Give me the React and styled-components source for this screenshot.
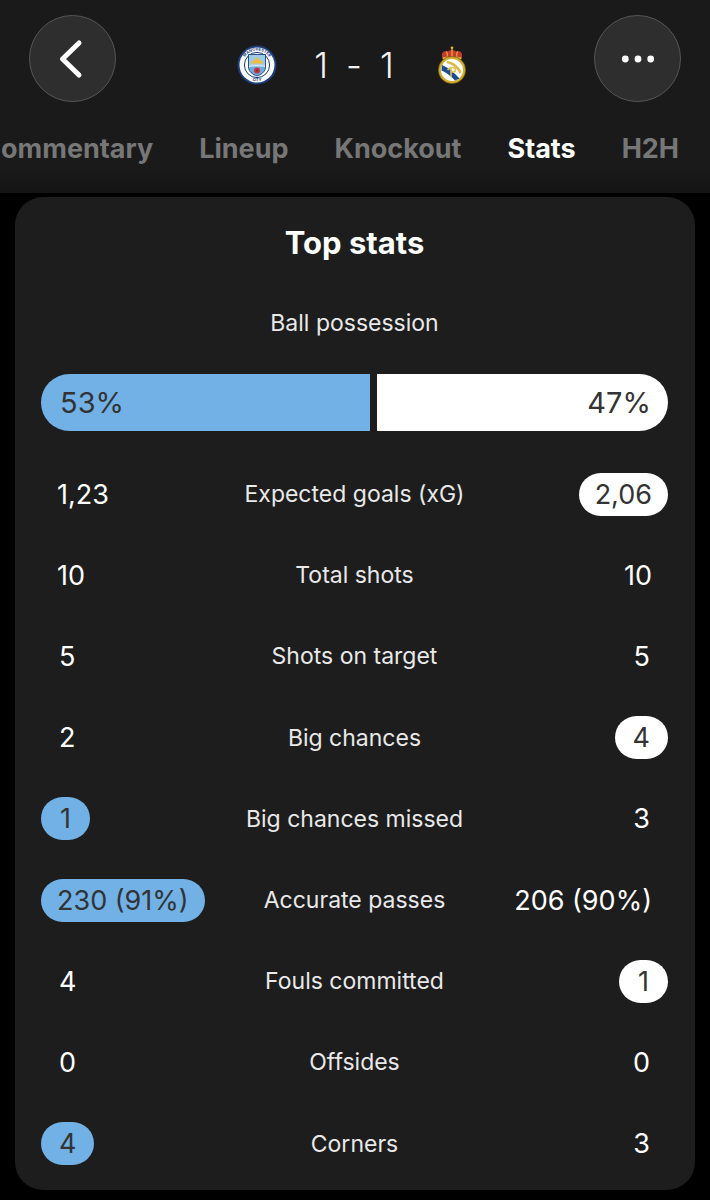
import React from "react";
import styled, { createGlobalStyle } from "styled-components";

const Global = createGlobalStyle`
  html, body { margin: 0; padding: 0; background: #000; }
  body { font-family: Inter, "Liberation Sans", sans-serif; -webkit-font-smoothing: antialiased; }
`;
const Page = styled.div`width: 710px; height: 1200px; overflow: hidden; background: #000;`;
const Header = styled.header`
  height: 193px; box-sizing: border-box; padding-top: 15px; overflow: hidden;
  background: linear-gradient(#1a1a1a 0, #1a1a1a 85%, #151515 100%);
`;
const TopRow = styled.div`display: flex; align-items: center; justify-content: space-between; padding: 0 29px;`;
const RoundButton = styled.button`
  width: 87px; height: 87px; box-sizing: border-box; border-radius: 50%; padding: 0;
  display: flex; align-items: center; justify-content: center;
  background: #2e2e2e; border: 1.5px solid #565656; color: #fff;
`;
const Score = styled.div`
  display: flex; align-items: center; height: 87px; padding-top: 13px; margin-right: 6px; box-sizing: border-box;
`;
const ScoreText = styled.div`
  width: 120px; margin: 0 23px 0 17px; display: flex; justify-content: center; gap: 18px; color: #f2f2f2;
  font-size: 35px; font-weight: 300; line-height: 44px;
`;
const Tabs = styled.nav`
  display: flex; justify-content: flex-end; gap: 46px; padding-right: 31px; margin-top: 29px;
  white-space: nowrap;
`;
const Tab = styled.span`
  font-size: 27px; line-height: 36px; font-weight: 700;
  color: ${p => (p.$active ? "#fff" : "#777")};
`;
const Card = styled.main`
  width: 680px; height: 993px; margin: 4px 0 0 15px; box-sizing: border-box; padding: 26px 27px 0 26px;
  background: #1d1d1d; border-radius: 28px; color: #fff;
`;
const Title = styled.h1`margin: 0; text-align: center; font-size: 31px; line-height: 40px; font-weight: 700;`;
const Label = styled.div`text-align: center; font-size: 23px; line-height: 30px; color: #e9e9e9; white-space: nowrap;`;
const PossessionLabel = styled(Label)`margin-top: 45px;`;
const Bar = styled.div`display: grid; grid-template-columns: 53fr 47fr; column-gap: 7px; height: 57px; margin-top: 36px;`;
const Segment = styled.div`
  display: flex; align-items: center; box-sizing: border-box;
  font-size: 29px; color: #333;
  justify-content: ${p => (p.$side === "left" ? "flex-start" : "flex-end")};
  padding: ${p => (p.$side === "left" ? "0 0 0 19px" : "0 17px 0 0")};
  background: ${p => (p.$side === "left" ? "#71b1e6" : "#fff")};
  border-radius: ${p => (p.$side === "left" ? "29px 0 0 29px" : "0 29px 29px 0")};
`;
const Rows = styled.div`margin-top: 22.5px;`;
const Row = styled.div`
  height: 81.2px; display: grid; grid-template-columns: 1fr auto 1fr; align-items: center; column-gap: 20px;
`;
const Cell = styled.div`display: flex; justify-content: ${p => (p.$side === "left" ? "flex-start" : "flex-end")};`;
const Value = styled.span`
  min-width: 49px; height: 43px; box-sizing: border-box; border-radius: 21.5px;
  padding: 0 ${p => (p.$single ? 18 : 16)}px;
  display: flex; align-items: center; justify-content: center;
  font-size: 27px; white-space: nowrap;
  color: ${p => (p.$win ? "#333" : "#fff")};
  background: ${p => (!p.$win ? "transparent" : p.$side === "left" ? "#71b1e6" : "#fff")};
`;

const Back = () => (
  <svg width="32" height="42" viewBox="0 0 32 42" fill="none">
    <path d="M22 5 L5.5 21 L22 37" stroke="#fff" strokeWidth="5" strokeLinecap="round" strokeLinejoin="round" />
  </svg>
);
const Dots = () => (
  <svg width="34" height="8" viewBox="0 0 34 8" fill="#fff">
    <circle cx="4.3" cy="4" r="3.4" /><circle cx="17" cy="4" r="3.4" /><circle cx="29.7" cy="4" r="3.4" />
  </svg>
);
const City = () => (
  <svg width="40" height="40" viewBox="0 0 40 40">
    <circle cx="20" cy="20" r="19.5" fill="#1c3f7c" />
    <circle cx="20" cy="20" r="17.5" fill="#f7f9fb" />
    <circle cx="20" cy="20" r="12.6" fill="#fff" stroke="#1c3f7c" strokeWidth="1" />
    <defs><path id="cityArc" d="M5.5 20 A14.5 14.5 0 0 1 34.5 20" /></defs>
    <text fontSize="3.9" fontWeight="700" fill="#1c3f7c" fontFamily="Inter, sans-serif" letterSpacing=".1">
      <textPath href="#cityArc" startOffset="50%" textAnchor="middle">MANCHESTER</textPath>
    </text>
    <text x="20" y="36.4" fontSize="3.6" fontWeight="700" fill="#1c3f7c" textAnchor="middle" fontFamily="Inter, sans-serif">CITY</text>
    <path d="M11.5 9.5 H28.5 V22 C28.5 27 24 29.5 20 31 C16 29.5 11.5 27 11.5 22 Z" fill="#6cabdd" stroke="#1c3f7c" strokeWidth=".9" />
    <path d="M12 10 H28 V19 H12 Z" fill="#9ccbe8" />
    <path d="M13.5 18.6 L16 15 L17.5 16 L18.8 12 L20 14 L21.4 12 L22.5 16 L24 15 L26.5 18.6 Z" fill="#f3bb3f" />
    <path d="M12 20 H28 M12 21.6 C15 20.6 25 20.6 28 21.6" stroke="#f1f5f8" strokeWidth="1" fill="none" />
    <circle cx="20" cy="25.5" r="3" fill="#c8323c" />
    <circle cx="20" cy="25.5" r="1" fill="#8a1c28" />
  </svg>
);
const Madrid = () => (
  <svg width="30" height="38" viewBox="0 0 30 38">
    <path d="M5.5 12 C3 7 7.5 4 11 5.5 C12.5 3.5 17.5 3.5 19 5.5 C22.5 4 27 7 24.5 12 Z" fill="#c63a2e" />
    <path d="M15 3 V11 M9.5 5.5 C10.5 7.5 10.5 10 10 11.5 M20.5 5.5 C19.5 7.5 19.5 10 20 11.5" stroke="#e2b33c" strokeWidth="1.2" fill="none" />
    <circle cx="15" cy="1.8" r="1.4" fill="#e2b33c" />
    <rect x="5.5" y="11" width="19" height="2.4" rx="1" fill="#d9a92f" />
    <circle cx="15" cy="24" r="13.6" fill="#d2ac2c" stroke="#6d5a1a" strokeWidth=".7" />
    <circle cx="15" cy="24" r="11" fill="#fff" />
    <path d="M5 19 C10 21 17 26 22.5 32.5 L18 34.5 C13.5 29.5 8.5 26 4.5 24.5 Z" fill="#1a4d93" />
    <path d="M10 15 C16 15.5 22 20 24.5 26 L22.8 28 C20 22 15.5 18.5 9.5 17 Z" fill="#d9b84a" />
    <path d="M10.5 24 C13 20.5 18.5 21 18.5 24 C18.5 26.5 15.5 26.5 14 25 M14 22 V31" stroke="#e3c04a" strokeWidth="1.6" fill="none" />
  </svg>
);

const stats = [
  ["1,23", "Expected goals (xG)", "2,06", "right"],
  ["10", "Total shots", "10"],
  ["5", "Shots on target", "5"],
  ["2", "Big chances", "4", "right"],
  ["1", "Big chances missed", "3", "left"],
  ["230 (91%)", "Accurate passes", "206 (90%)", "left"],
  ["4", "Fouls committed", "1", "right"],
  ["0", "Offsides", "0"],
  ["4", "Corners", "3", "left"],
];

export default function App() {
  return (
    <Page>
      <Global />
      <Header>
        <TopRow>
          <RoundButton aria-label="Back"><Back /></RoundButton>
          <Score>
            <City />
            <ScoreText><span>1</span><span>-</span><span>1</span></ScoreText>
            <Madrid />
          </Score>
          <RoundButton aria-label="More"><Dots /></RoundButton>
        </TopRow>
        <Tabs>
          <Tab>Commentary</Tab>
          <Tab>Lineup</Tab>
          <Tab>Knockout</Tab>
          <Tab $active>Stats</Tab>
          <Tab>H2H</Tab>
        </Tabs>
      </Header>
      <Card>
        <Title>Top stats</Title>
        <PossessionLabel>Ball possession</PossessionLabel>
        <Bar>
          <Segment $side="left">53%</Segment>
          <Segment $side="right">47%</Segment>
        </Bar>
        <Rows>
          {stats.map(([l, name, r, win]) => (
            <Row key={name}>
              <Cell $side="left"><Value $side="left" $single={l.length === 1} $win={win === "left"}>{l}</Value></Cell>
              <Label>{name}</Label>
              <Cell $side="right"><Value $side="right" $single={r.length === 1} $win={win === "right"}>{r}</Value></Cell>
            </Row>
          ))}
        </Rows>
      </Card>
    </Page>
  );
}
